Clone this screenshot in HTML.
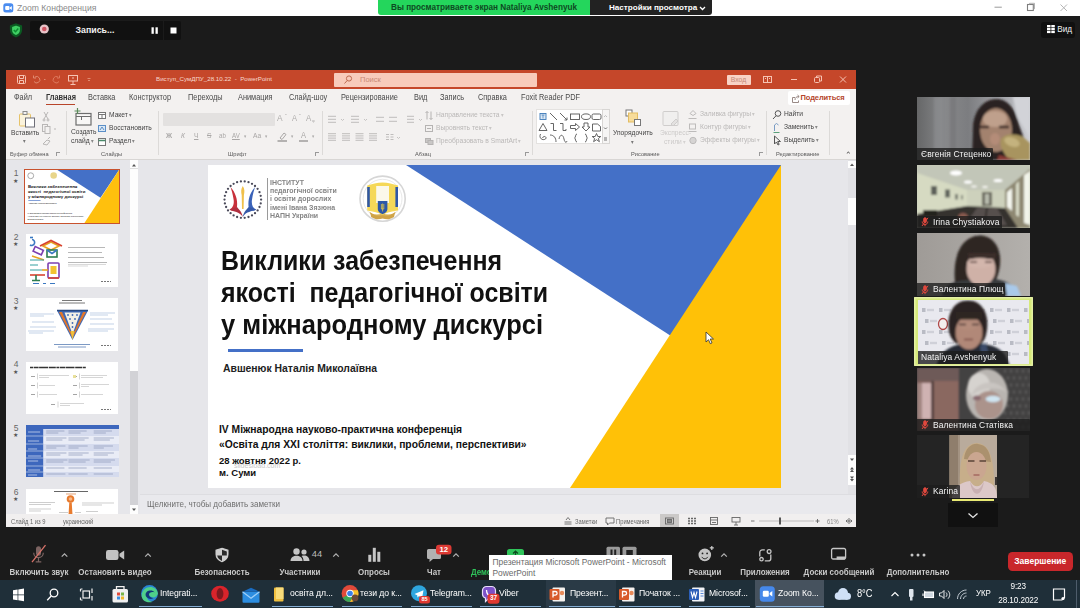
<!DOCTYPE html>
<html lang="ru">
<head>
<meta charset="utf-8">
<title>Zoom Конференция</title>
<style>
*{box-sizing:border-box;margin:0;padding:0}
html,body{width:1080px;height:608px;overflow:hidden}
body{background:#1b1b1b;font-family:"Liberation Sans",sans-serif;position:relative;color:#fff}
.a{position:absolute;white-space:nowrap}
svg{position:absolute;overflow:visible}
/* ---------- zoom title bar ---------- */
#tb{left:0;top:0;width:1080px;height:16px;background:#fff}
#tb .t{left:17px;top:2px;font-size:8.6px;color:#8a8a8a;line-height:12px}
#ban{left:378px;top:0;width:212px;height:15px;background:#24d65c;border-radius:0 0 0 3px;color:#0e4a22;font-weight:bold;font-size:8.2px;line-height:15px;text-align:center}
#ban2{left:590px;top:0;width:122px;height:15px;background:#222;border-radius:0 0 3px 0;color:#fff;font-weight:bold;font-size:8.1px;line-height:15px;text-align:left;padding-left:19px}
/* ---------- ppt ---------- */
#ppt{left:6px;top:69.500px;width:850px;height:457px;background:#e6e6ea;overflow:hidden}
#ppt .bar{left:0;top:0;width:850px;height:19px;background:#c5472a}
#ppt .tabs{left:0;top:19px;width:850px;height:18px;background:#f3f1f0}
#ppt .rib{left:0;top:37px;width:850px;height:53px;background:#f3f1f0;border-bottom:1px solid #d8d6d4}
#ppt .status{left:0;top:444px;width:850px;height:14px;background:#f1efef;padding-top:1px}
#slide{left:202px;top:95.500px;width:573px;height:323px;background:#fff;overflow:hidden}

#slide .h{left:13px;font-weight:bold;font-size:27.300px;line-height:32px;color:#111;transform-origin:0 50%;transform:scaleX(.914)}
#slide .n{left:15px;top:198px;font-weight:bold;font-size:10.4px;line-height:12px;color:#222}
#slide .c{left:11px;font-weight:bold;font-size:10.3px;line-height:12px;color:#111}
#slide .d{left:11px;font-weight:bold;font-size:9.5px;line-height:12px;color:#111}
#slide .ul{left:20px;top:184px;width:75px;height:3px;background:#4470c7}
#slide .inst{left:62px;top:13.5px;font-size:7.5px;line-height:8.35px;color:#858585;font-weight:bold;white-space:pre;transform-origin:0 0;transform:scaleX(.93)}
#slide .vl{left:58.5px;top:13px;width:1px;height:42px;background:#9a9a9a}
#slide .wm{left:26px;top:297px;font-size:7px;color:#c8c8c8}

#ppt .ttl{font-size:6.2px;line-height:12px;color:#f7d9cf}
#ppt .srch{left:328px;top:3.500px;width:203px;height:13.500px;background:#f8cbbb;border-radius:1px}
#ppt .srt{font-size:7.5px;line-height:12px;color:#c98a76}
#ppt .vhod{left:720.5px;top:5.500px;width:24px;height:9.500px;background:#f8d3c6;color:#c48a78;font-size:6.800px;line-height:9.500px;text-align:center;border-radius:1px}
#ppt .tab{font-size:8.2px;line-height:12px;color:#4a4a4a;transform-origin:0 50%;transform:scaleX(.9)}
#ppt .tab b{color:#333}
#ppt .share{left:782px;top:2.500px;width:62px;height:14px;background:#fff;border-radius:2px;color:#b5452b;font-size:7.500px;line-height:14px;padding-left:12.500px;letter-spacing:-.1px}
#ppt .rt{font-size:7.6px;line-height:10px;color:#444;transform-origin:0 50%;transform:scaleX(.88)}
#ppt .rd{font-size:7.6px;line-height:10px;color:#bab8b7;transform-origin:0 50%;transform:scaleX(.88)}
#ppt .gl{font-size:6.2px;line-height:10px;color:#585858;transform-origin:0 50%;transform:scaleX(.92)}

#thumbs{left:0;top:0;width:140px;height:458px}
#thumbs .tn{left:5px;margin-top:-3.500px;width:10px;text-align:center;font-size:8.500px;line-height:10px;color:#666}
#thumbs .tst{left:6.500px;margin-top:-3.500px;font-size:5.500px;line-height:7px;color:#555}
#thumbs .th{background:#fff;overflow:hidden}
#thumbs .sel{border:1.200px solid #c8522f}
#thumbs .t1{left:2.500px;font-weight:bold;font-size:4.400px;line-height:5px;color:#222}
#thumbs .t2{left:2px;font-weight:bold;font-size:1.900px;line-height:2px;color:#555}

#ppt .st{font-size:6.300px;line-height:9px;color:#666;transform-origin:0 50%;transform:scaleX(.92)}

.tile{overflow:visible}
.tile>svg{overflow:hidden}
.tile .nm{left:0;bottom:0;height:12.500px;background:rgba(28,28,28,.78);color:#f4f4f4;font-size:9px;line-height:12.500px;border-radius:0 1px 0 0;letter-spacing:.1px}
.tile .nm span{display:inline-block;transform-origin:0 50%;transform:scaleX(.94)}
#ppt .dd{font-size:5.500px;color:#888}
#ppt .rd .dd{color:#c8c6c5}
/* ---------- bottom ---------- */
#rec{left:29.600px;top:21.300px;width:151px;height:18.500px;background:#111;border-radius:2px}
#vid{left:1041px;top:22.200px;width:33.500px;height:15.600px;background:#101010;border-radius:3px}

#zbar .zl{font-size:8.600px;line-height:12px;color:#c8c8c8;font-weight:bold;transform:scaleX(.925)}
#endb{width:65.500px;height:18.500px;background:#c9272b;border-radius:4.500px;color:#fff;font-weight:bold;font-size:8.500px;line-height:19px;text-align:center}
#tip{width:183.500px;height:25px;background:#fff;color:#6a6a6a;font-size:8.400px;line-height:10.200px;padding:2.400px 0 0 3.800px;white-space:nowrap;transform-origin:0 0}
#task .tk{font-size:9.300px;line-height:11px;color:#fff;letter-spacing:-.1px;transform-origin:0 50%;transform:scaleX(.93)}

#zbar{left:0;top:527px;width:1080px;height:53px;background:#1b1b1b}
#task{left:0;top:579.500px;width:1080px;height:28.500px;background:#1f2f39}
</style>
</head>
<body>
<div class="a" id="tb">
  <div class="a t">Zoom Конференция</div>
</div>
<div class="a" id="ban"><span>Вы просматриваете экран Nataliya Avshenyuk</span></div>
<div class="a" id="ban2"><span>Настройки просмотра</span><svg width="7" height="5" viewBox="0 0 7 5" style="left:109px;top:5.500px" fill="none" stroke="#fff" stroke-width="1.3"><path d="M1,1l2.500,2.500l2.500,-2.500"/></svg></div>

<div class="a" id="ppt">
<!--TOP-->
<div class="a bar">
<svg width="850" height="19" viewBox="0 0 850 19" style="left:0;top:0" fill="none" stroke="#f6c3b3" stroke-width="1"><rect x="11.5" y="5.5" width="8" height="8" rx="1"/><path d="M13.5,5.5v3h4v-3M13.5,13.5v-3h4v3"/><path d="M28,11.5a3.2,3.2 0 1 0 1,-4.5M27.5,5.5v2.5h2.5" stroke="#e08a70"/><path d="M38,9.5h1.5" stroke="#e08a70"/><path d="M53,11.5a3.2,3.2 0 1 1 -1,-4.5M53.500,5.5v2.5h-2.5" stroke="#de7a5e"/><rect x="62.500" y="5.500" width="9" height="5.500" /><path d="M67,11v3M64.500,14.500h5M67,7v2"/><path d="M81.500,8.500h3M82,10.500h2" stroke="#e08a70"/></svg>
<div class="a ttl" style="left:150.0px;top:3.5px;">Виступ_СумДПУ_28.10.22&nbsp; -&nbsp; PowerPoint</div>
<div class="a srch"></div>
<div class="a srt" style="left:354.0px;top:4.0px;">Поиск</div>
<div class="a vhod">Вход</div>
<svg width="850" height="19" viewBox="0 0 850 19" style="left:0;top:0" fill="none" stroke="#f6c3b3" stroke-width="1"><circle cx="343" cy="8.500" r="2.600" stroke="#bf6a50"/><path d="M341.200,10.500l-2.700,3" stroke="#bf6a50"/><rect x="757.500" y="6.500" width="8" height="6"/><path d="M761.500,6.500v6M759,8.500h1M763,8.500h1"/><path d="M785,9.500h6"/><rect x="808.500" y="7.500" width="5" height="5" rx="1"/><path d="M810.500,7.500v-1.500h5v5h-1.500"/><path d="M834,6.500l6,6M840,6.500l-6,6"/></svg>
</div>
<div class="a tabs">
<div class="a tab" style="left:8px;top:3.500px">Файл</div>
<div class="a tab" style="left:40px;top:3.500px"><b>Главная</b></div>
<div class="a tab" style="left:82px;top:3.500px">Вставка</div>
<div class="a tab" style="left:123px;top:3.500px">Конструктор</div>
<div class="a tab" style="left:182px;top:3.500px">Переходы</div>
<div class="a tab" style="left:232px;top:3.500px">Анимация</div>
<div class="a tab" style="left:283px;top:3.500px">Слайд-шоу</div>
<div class="a tab" style="left:335px;top:3.500px">Рецензирование</div>
<div class="a tab" style="left:408px;top:3.500px">Вид</div>
<div class="a tab" style="left:434px;top:3.500px">Запись</div>
<div class="a tab" style="left:472px;top:3.500px">Справка</div>
<div class="a tab" style="left:515px;top:3.500px">Foxit Reader PDF</div>
<div class="a" style="left:40px;top:15px;width:29px;height:1.600px;background:#b8452a"></div>
<div class="a share"><svg width="10" height="10" viewBox="0 0 10 10" style="left:2.500px;top:3px" fill="none" stroke="#9a8a86" stroke-width="1"><path d="M4,3.500h-2.500v5h6v-2M4,6c0,-2.500 1.500,-3.500 4,-3.500M6.500,1l1.700,1.500l-1.700,1.500"/></svg><b>Поделиться</b></div>
</div>
<!--/TOP-->
<!--RIB-->
<div class="a rib">
<div class="a" style="left:60px;top:4px;width:1px;height:44px;background:#dcdad8"></div>
<div class="a" style="left:152px;top:4px;width:1px;height:44px;background:#dcdad8"></div>
<div class="a" style="left:316px;top:4px;width:1px;height:44px;background:#dcdad8"></div>
<div class="a" style="left:526px;top:4px;width:1px;height:44px;background:#dcdad8"></div>
<div class="a" style="left:760px;top:4px;width:1px;height:44px;background:#dcdad8"></div>
<div class="a" style="left:823px;top:4px;width:1px;height:44px;background:#dcdad8"></div>
<div class="a gl" style="left:4.0px;top:42.6px;">Буфер обмена</div>
<div class="a gl" style="left:95.0px;top:42.6px;">Слайды</div>
<div class="a gl" style="left:222.0px;top:42.6px;">Шрифт</div>
<div class="a gl" style="left:409.0px;top:42.6px;">Абзац</div>
<div class="a gl" style="left:625.0px;top:42.6px;">Рисование</div>
<div class="a gl" style="left:770.0px;top:42.6px;">Редактирование</div>
<div class="a" style="left:50px;top:45px;width:4px;height:4px;border-left:1px solid #999;border-top:1px solid #999"></div>
<div class="a" style="left:309px;top:45px;width:4px;height:4px;border-left:1px solid #999;border-top:1px solid #999"></div>
<div class="a" style="left:519px;top:45px;width:4px;height:4px;border-left:1px solid #999;border-top:1px solid #999"></div>
<div class="a" style="left:753px;top:45px;width:4px;height:4px;border-left:1px solid #999;border-top:1px solid #999"></div>
<div class="a rt" style="left:5.0px;top:21.2px;">Вставить</div>
<div class="a rt" style="left:16.5px;top:29.8px;font-size:5.500px;color:#777">▾</div>
<div class="a rt" style="left:65.0px;top:20.5px;">Создать</div>
<div class="a rt" style="left:65.0px;top:29.6px;">слайд<span class="dd"> ▾</span></div>
<div class="a rt" style="left:103.0px;top:3.5px;">Макет<span class="dd"> ▾</span></div>
<div class="a rt" style="left:103.0px;top:16.5px;">Восстановить</div>
<div class="a rt" style="left:103.0px;top:29.8px;">Раздел<span class="dd"> ▾</span></div>
<div class="a" style="left:157px;top:6px;width:112px;height:13px;background:#e3e1e0;border-radius:1px"></div>
<div class="a rd" style="left:270.5px;top:6.3px;font-size:9.5px;color:#aeacab">A</div>
<div class="a rd" style="left:279.0px;top:6.3px;font-size:6px;margin-top:-2px;color:#aeacab">ˆ</div>
<div class="a rd" style="left:286.0px;top:6.3px;font-size:8.5px;color:#aeacab">A</div>
<div class="a rd" style="left:293.0px;top:6.3px;font-size:6px;margin-top:-2px;color:#aeacab">ˇ</div>
<div class="a rd" style="left:300.0px;top:6.3px;font-size:9px;color:#aeacab">A</div>
<div class="a rd" style="left:306.0px;top:6.3px;font-size:7px;margin-top:2px;color:#aeacab">ᵩ</div>
<div class="a rd" style="left:160.0px;top:24.4px;font-weight:bold;color:#a9a7a6">Ж</div>
<div class="a rd" style="left:174.5px;top:24.4px;font-style:italic;color:#a9a7a6">К</div>
<div class="a rd" style="left:187.5px;top:24.4px;text-decoration:underline;color:#a9a7a6">Ч</div>
<div class="a rd" style="left:201.0px;top:24.4px;text-decoration:line-through;color:#a9a7a6">S</div>
<div class="a rd" style="left:212.5px;top:24.4px;font-size:7px;color:#a9a7a6">ab</div>
<div class="a rd" style="left:226.0px;top:24.4px;text-decoration:underline;font-size:7px;color:#a9a7a6">AV</div>
<div class="a rd" style="left:238.0px;top:24.4px;font-size:5px;color:#a9a7a6">▾</div>
<div class="a rd" style="left:247.0px;top:24.4px;;color:#a9a7a6">Aa</div>
<div class="a rd" style="left:259.0px;top:24.4px;font-size:5px;color:#a9a7a6">▾</div>
<div class="a rd" style="left:285.0px;top:24.4px;font-size:5px;color:#a9a7a6">▾</div>
<div class="a rd" style="left:294.5px;top:24.4px;font-size:8.500px;margin-top:-1px;color:#a9a7a6">A</div>
<div class="a rd" style="left:306.0px;top:24.4px;font-size:5px;color:#a9a7a6">▾</div>
<div class="a rd" style="left:430.0px;top:3.3px;">Направление текста<span class="dd"> ▾</span></div>
<div class="a rd" style="left:430.0px;top:16.5px;">Выровнять текст<span class="dd"> ▾</span></div>
<div class="a rd" style="left:430.0px;top:29.8px;">Преобразовать в SmartArt<span class="dd"> ▾</span></div>
<div class="a" style="left:530px;top:2.5px;width:73.5px;height:34.5px;background:#fff;border:1px solid #e4e2e0"></div>
<div class="a" style="left:595.5px;top:2.5px;width:8px;height:34.5px;background:#f6f5f4;border:1px solid #d8d6d4"></div>
<div class="a rt" style="left:606.7px;top:21.0px;">Упорядочить</div>
<div class="a rt" style="left:625.0px;top:30.0px;font-size:5.500px;color:#777">▾</div>
<div class="a rd" style="left:654.0px;top:21.0px;opacity:.7">Экспресс-</div>
<div class="a rd" style="left:658.0px;top:30.5px;opacity:.7">стили<span class="dd"> ▾</span></div>
<div class="a rd" style="left:694.0px;top:2.9px;">Заливка фигуры<span class="dd"> ▾</span></div>
<div class="a rd" style="left:694.0px;top:15.5px;">Контур фигуры<span class="dd"> ▾</span></div>
<div class="a rd" style="left:694.0px;top:28.4px;">Эффекты фигуры<span class="dd"> ▾</span></div>
<div class="a rt" style="left:778.0px;top:2.9px;">Найти</div>
<div class="a rt" style="left:778.0px;top:15.5px;">Заменить<span class="dd"> ▾</span></div>
<div class="a rt" style="left:778.0px;top:28.4px;">Выделить<span class="dd"> ▾</span></div>
<div class="a rt" style="left:839.0px;top:43.6px;font-size:9px;margin-top:0px;color:#555">⌃</div>
<svg width="850" height="53" viewBox="0 0 850 53" style="left:0;top:0" fill="none" stroke-width="1">
<g transform="translate(20,15)"><rect x="-6.500" y="-8" width="11" height="12" rx="1" stroke="#e6c36a" fill="#fbf3dc"/><rect x="-3" y="-10.500" width="4" height="3" stroke="#8a8a8a" fill="#f3f1f0"/><rect x="-.5" y="-4" width="9" height="9" stroke="#6f6f78" fill="#fff"/></g>
<g stroke="#b9b7b6"><path d="M38.0,5.0l4,7M42.0,5.0l-4,7"/><circle cx="38.0" cy="13.0" r="1"/><circle cx="42.0" cy="13.0" r="1"/><rect x="36.5" y="17.5" width="5" height="7"/><rect x="39.0" y="19.5" width="5" height="7" fill="#f3f1f0"/><path d="M48.0,22.0h2"/><path d="M37.0,37.0l4,-4l3,1l-3,4zM42.0,32.0l2,-2"/></g>
<g transform="translate(77,12)" stroke="#6d6d6d"><rect x="-7" y="-5.500" width="15" height="11.500" stroke-width="1.200" fill="#f8f7f6"/><path d="M-7,-2.500h15M-1.500,-2.500v3.500" stroke-width="1"/><path d="M-5.500,-11v6M-8.500,-8h6" stroke="#5a8a5a" stroke-width="1.200"/></g>
<g stroke="#777"><rect x="92.5" y="5.5" width="7" height="6" fill="#fff"/><path d="M92.5,7.5h7M96.0,7.5v4"/><rect x="92.5" y="18.5" width="7" height="6" stroke="#5b8fc7" fill="#dbe8f5"/><path d="M94.0,23.0l2,-3l2,3" stroke="#5b8fc7"/><rect x="92.5" y="31.5" width="7" height="7" fill="#fff"/><path d="M92.5,33.5h7" stroke="#4a8a6a" stroke-width="1.500"/></g>
<path d="M322.0,9.3h8" stroke="#bfbdbc"/><path d="M322.0,12.3h8" stroke="#bfbdbc"/><path d="M322.0,15.3h8" stroke="#bfbdbc"/><path d="M345.0,9.3h8" stroke="#bfbdbc"/><path d="M345.0,12.3h8" stroke="#bfbdbc"/><path d="M345.0,15.3h8" stroke="#bfbdbc"/><path d="M370.0,10.3h8" stroke="#bfbdbc"/><path d="M370.0,14.3h8" stroke="#bfbdbc"/><path d="M383.0,10.3h8" stroke="#bfbdbc"/><path d="M383.0,14.3h8" stroke="#bfbdbc"/><path d="M401.0,9.3h7" stroke="#bfbdbc"/><path d="M401.0,12.3h7" stroke="#bfbdbc"/><path d="M401.0,15.3h7" stroke="#bfbdbc"/>
<path d="M335.0,12.0l1.5,1.500l1.500,-1.500" stroke="#c5c3c2"/>
<path d="M358.0,12.0l1.5,1.500l1.500,-1.500" stroke="#c5c3c2"/>
<path d="M413.0,12.0l1.5,1.500l1.500,-1.500" stroke="#c5c3c2"/>
<path d="M322.0,26.7h8" stroke="#bfbdbc"/><path d="M322.0,28.9h8" stroke="#bfbdbc"/><path d="M322.0,31.1h8" stroke="#bfbdbc"/><path d="M322.0,33.3h8" stroke="#bfbdbc"/>
<path d="M336.0,26.7h8" stroke="#bfbdbc"/><path d="M336.0,28.9h8" stroke="#bfbdbc"/><path d="M336.0,31.1h8" stroke="#bfbdbc"/><path d="M336.0,33.3h8" stroke="#bfbdbc"/>
<path d="M349.5,26.7h8" stroke="#bfbdbc"/><path d="M349.5,28.9h8" stroke="#bfbdbc"/><path d="M349.5,31.1h8" stroke="#bfbdbc"/><path d="M349.5,33.3h8" stroke="#bfbdbc"/>
<path d="M363.0,26.7h8" stroke="#bfbdbc"/><path d="M363.0,28.9h8" stroke="#bfbdbc"/><path d="M363.0,31.1h8" stroke="#bfbdbc"/><path d="M363.0,33.3h8" stroke="#bfbdbc"/>
<path d="M380.0,27.5h3" stroke="#bfbdbc"/><path d="M380.0,30.0h3" stroke="#bfbdbc"/><path d="M380.0,32.5h3" stroke="#bfbdbc"/><path d="M384.5,27.5h3" stroke="#bfbdbc"/><path d="M384.5,30.0h3" stroke="#bfbdbc"/><path d="M384.5,32.5h3" stroke="#bfbdbc"/><path d="M391.0,30.0l1.500,1.500l1.500,-1.500" stroke="#c5c3c2"/>
<g stroke="#b5b3b2"><path d="M421.0,4.5v8M425.0,4.5v8M419.5,6.0l1.500,-1.500l1.500,1.500M423.5,11.0l1.500,1.500l1.500,-1.500"/><rect x="419.5" y="18.5" width="7" height="6"/><path d="M421.0,21.5h4"/><rect x="419.5" y="31.5" width="5" height="4" fill="#c9c7c6"/><rect x="422.0" y="33.5" width="5" height="4" fill="#c9c7c6"/></g>
<g stroke="#a9a7a6"><path d="M274.0,31.0l4,-5l2,1.500l-4,5z"/><path d="M271.5,34.0h9.500" stroke-width="1.700"/><path d="M293.0,34.0h9" stroke-width="1.700"/></g>
<g stroke="#555" stroke-width=".9"><rect x="534.0" y="6.5" width="6" height="6" stroke="#3d7ab8" fill="#dce9f5"/><path d="M535.5,8.0h3M537.0,8.0v3.500" stroke="#3d7ab8" stroke-width=".7"/><path d="M544.0,6.0l7,7"/><path d="M554.0,6.0l7,7M561.0,10.5v2.500h-2.500"/><rect x="564.5" y="7.0" width="9" height="5.500"/><ellipse cx="580.0" cy="9.7" rx="4.500" ry="2.800"/><rect x="586.0" y="7.0" width="9" height="5.500" rx="1.500"/><path d="M537.0,16.5l4,7h-8z"/><path d="M544.5,16.5h3v7h3"/><path d="M554.0,16.5h3v7h3M560.0,22.0v1.500"/><path d="M564.5,18.5h5v-2l4,3.500l-4,3.500v-2h-5z"/><path d="M578.0,16.0h4v4h2l-4,4l-4,-4h2z"/><path d="M586.5,17.0h5l3,2.500v4.500h-8z"/><path d="M534.5,27.0c-2,4 2,7 5,5c2,-2 -2,-4 -3,-1"/><path d="M544.0,28.0c4,0 6,3 6,7"/><path d="M553.0,32.0c1,-5 4,-5 5,0s3,3 3,2"/><path d="M571.0,27.0c-2,0 -1,3.500 -2.500,4c1.500,.5 .5,4 2.500,4"/><path d="M579.0,27.0c2,0 1,3.500 2.500,4c-1.500,.5 -.5,4 -2.500,4"/><path d="M590.5,26.5l1.300,3h3l-2.400,2l1,3.200l-2.900,-2l-2.900,2l1,-3.200l-2.400,-2h3z"/><path d="M598.0,20.5l1.500,1.500l1.500,-1.500M598.0,31.0h3M598.0,33.0h3" stroke="#666"/><path d="M598.0,10.0l1.500,-1.500l1.500,1.500" stroke="#bbb"/></g>
<g transform="translate(627,11)"><rect x="-7" y="-8" width="6" height="6" stroke="#777" fill="#fff"/><rect x="-4.500" y="-5" width="9" height="9" stroke="#e3bd62" fill="#f7dc9a"/><rect x="1.500" y="1.500" width="6" height="6" stroke="#777" fill="#fff"/></g>
<g transform="translate(665,12)" stroke="#cfcdcc"><rect x="-8" y="-7.500" width="15" height="14" rx="1" fill="#f0efee"/><path d="M0,5l5,-5l2,2l-5,5z" fill="#e3e1e0"/></g>
<g stroke="#bdbbba"><path d="M684.0,6.5l3,-3l3,3l-3,2zM682.5,11.5h8" /><rect x="683.5" y="17.0" width="6" height="5"/><path d="M682.5,24.5h8"/><circle cx="687.0" cy="33.5" r="3.200" fill="#d6d4d3"/></g>
<g stroke="#555"><circle cx="772.0" cy="6.5" r="2.800"/><path d="M770.0,8.8l-3,3.200"/></g>
<g stroke="#7a9cc4"><path d="M768.5,24.0v-6l2,-1.500l2,1.500" /><path d="M767.5,25.5h6" stroke="#5aa07a"/></g>
<path d="M768.5,29.0v8l2,-2l1.500,3l1.200,-.6l-1.500,-2.900h2.800z" stroke="#555"/>
</svg>
</div>
<!--/RIB-->
<!--PANEL-->
<div class="a" id="thumbs">
<div class="a tn" style="top:102.3px">1</div>
<div class="a tst" style="top:111.8px">★</div>
<div class="a tn" style="top:165.7px">2</div>
<div class="a tst" style="top:175.2px">★</div>
<div class="a tn" style="top:229.5px">3</div>
<div class="a tst" style="top:239.0px">★</div>
<div class="a tn" style="top:293.0px">4</div>
<div class="a tst" style="top:302.5px">★</div>
<div class="a tn" style="top:356.8px">5</div>
<div class="a tst" style="top:366.3px">★</div>
<div class="a tn" style="top:420.6px">6</div>
<div class="a tst" style="top:430.1px">★</div>
<div class="a th sel" style="left:18.4px;top:99.5px;width:95.600px;height:54.800px"><svg width="94" height="53" viewBox="0 0 574 323" style="left:0;top:0" preserveAspectRatio="none"><polygon points="198,0 574,0 461,169" fill="#4470c7"/><polygon points="574,0 574,323 363,323" fill="#ffc00d"/><circle cx="35" cy="35" r="18" fill="none" stroke="#999" stroke-width="5"/><circle cx="175" cy="34" r="20" fill="#e8d58a"/><rect x="20" y="183" width="75" height="4" fill="#4470c7"/></svg><div class="a t1" style="top:13.500px">Виклики забезпечення</div><div class="a t1" style="top:18.800px">якості&nbsp; педагогічної освіти</div><div class="a t1" style="top:24.100px">у міжнародному дискурсі</div><div class="a t2" style="top:32px;left:3px">Авшенюк Наталія Миколаївна</div><div class="a t2" style="top:42px">IV Міжнародна науково-практична конференція</div><div class="a t2" style="top:44.500px">«Освіта для XXI століття: виклики, проблеми, перспективи»</div><div class="a t2" style="top:47.500px">28 жовтня 2022 р.</div></div>
<div class="a th" style="left:20.3px;top:164.7px;width:91.700px;height:52.500px"><svg width="92" height="53" viewBox="0 0 92 53" style="left:0;top:0" fill="none" stroke-width="1.600"><path d="M6,5.500a3,3 0 1 1 -2,5.500" stroke="#3a78c2"/><path d="M4,3.500h3" stroke="#3a78c2"/><path d="M17,12l8,-4l8,4l-8,4z" stroke="#e6a320"/><path d="M14,12l11,-5.500l11,5.500" stroke="#d8432f"/><rect x="8" y="14" width="9" height="5" transform="rotate(25 12 16)" stroke="#7c3fb0"/><path d="M6,22l12,4" stroke="#e6a320"/><rect x="21" y="16" width="10" height="7" stroke="#2e7d4f"/><path d="M21,16l5,3.500l5,-3.500" stroke="#3a78c2"/><rect x="22" y="29" width="11" height="15" rx="1" stroke="#7c3fb0"/><rect x="24.500" y="32" width="6" height="8" fill="#f2c230" stroke="none"/><path d="M22,44h11" stroke="#d8432f"/><path d="M4,26h14M4,31h8M4,36h12" stroke="#35a0a0" stroke-width="1"/><path d="M4,41h15" stroke="#d8432f"/><path d="M10,41v5M6,46.500h8" stroke="#2e7d4f"/><path d="M16,36h6" stroke="#e6a320"/><path d="M7,49.500h6M17,49.500h3M24,49.500h5" stroke="#3a78c2" stroke-width="1"/><g stroke="#9a9a9a" stroke-width=".7"><path d="M42,13.500h37M42,18.500h34M42,23.500h36M42,28.500h39"/><path d="M42,30.500h38M42,32h20" stroke="#c8c8c8"/></g><path d="M75,47.500h10" stroke="#777" stroke-width="1.200" stroke-dasharray="2 1"/></svg></div>
<div class="a th" style="left:20.3px;top:228.5px;width:91.700px;height:52.500px"><svg width="92" height="53" viewBox="0 0 92 53" style="left:0;top:0" fill="none"><path d="M36,2.500h20M33,5h26" stroke="#555" stroke-width=".8"/><polygon points="31,12.500 62,12.500 46.500,42" fill="#3f69b5"/><polygon points="33,14 60,14 46.500,40" fill="#e2762a"/><polygon points="36,14 57,14 46.500,38" fill="#3f69b5"/><polygon points="38.500,14.500 54.500,14.500 46.500,36" fill="#f3f0e6"/><polygon points="44.500,33 48.500,33 46.500,42" fill="#f0c23a"/><path d="M31,12.500h31" stroke="#27477f" stroke-width="1.500"/><g fill="#3f69b5"><circle cx="42" cy="17" r=".9"/><circle cx="46.500" cy="17" r=".9"/><circle cx="51" cy="17" r=".9"/><circle cx="44" cy="21" r=".9"/><circle cx="49" cy="21" r=".9"/><circle cx="46.500" cy="25" r=".9"/><circle cx="46.500" cy="29" r=".9"/></g><g stroke="#a9bfdc" stroke-width=".7"><path d="M4,16h24M4,18h14M6,24h22M4,29h26M2,33h26M3,35h14"/><path d="M64,15h25M64,17h18M64,21h22M64,26h24M62,31h26M62,33h20"/></g><path d="M28,46.500h36M32,49h28" stroke="#5a7fb5" stroke-width=".8"/><path d="M75,47.500h10" stroke="#777" stroke-width="1.200" stroke-dasharray="2 1"/></svg></div>
<div class="a th" style="left:20.3px;top:292.0px;width:91.700px;height:52.500px"><svg width="92" height="53" viewBox="0 0 92 53" style="left:0;top:0" fill="none"><path d="M4,5.500h56" stroke="#333" stroke-width="1.300" stroke-dasharray="3 .6 5 .5 9 .7 7 .6"/><g stroke="#9a9a9a" stroke-width=".9"><path d="M5,14.500h4M5,23.500h4M5,32.500h4M47,14.500h4M47,23.500h4M47,32.500h4M25,42.500h4"/></g><g stroke="#bbb" stroke-width=".6"><path d="M11.500,11.500v6M11.500,20.500v6M11.500,29.500v6M53.500,11.500v6M53.500,20.500v6M53.500,29.500v6M32,39.500v6"/></g><g stroke="#c4c4c4" stroke-width=".7"><path d="M13,13.500h30M13,15.500h10M13,23.500h16M13,32.500h18M55,13.500h26M55,15.500h22M55,22.500h28M55,24.500h8M55,32.500h22M34,41.500h24M34,43.500h10"/></g><path d="M48.500,13v3" stroke="#e8e09a" stroke-width="3"/><path d="M75,47.500h10" stroke="#777" stroke-width="1.200" stroke-dasharray="2 1"/></svg></div>
<div class="a th" style="left:19.7px;top:355.8px;width:92.900px;height:52.200px;background:#e4e8f4"><svg width="93" height="53" viewBox="0 0 92 53" style="left:0;top:0" preserveAspectRatio="none" fill="none"><rect x="0" y="4" width="92" height="7" fill="#d5dbee"/><rect x="0" y="11" width="92" height="8" fill="#e9ecf6"/><rect x="0" y="19" width="92" height="7" fill="#d5dbee"/><rect x="0" y="26" width="92" height="7" fill="#e9ecf6"/><rect x="0" y="33" width="92" height="8" fill="#d5dbee"/><rect x="0" y="41" width="92" height="6" fill="#e9ecf6"/><rect x="0" y="47" width="92" height="5.5" fill="#d5dbee"/><rect x="0" y="0" width="92" height="4" fill="#3d67bd"/><rect x="0" y="4" width="17" height="49" fill="#3d67bd"/><g stroke="#8d97b8" stroke-width=".7"><path d="M20,6h18" /><path d="M20,8h12" /><path d="M20,13h20" /><path d="M20,15h16" /><path d="M20,21h19" /><path d="M20,23h10" /><path d="M20,28h20" /><path d="M20,30h14" /><path d="M20,35h21" /><path d="M20,37h17" /><path d="M20,43h18" /><path d="M20,49h19" /><path d="M42,6h18" /><path d="M42,8h12" /><path d="M42,13h20" /><path d="M42,15h16" /><path d="M42,21h19" /><path d="M42,23h10" /><path d="M42,28h20" /><path d="M42,30h14" /><path d="M42,35h21" /><path d="M42,37h17" /><path d="M42,43h18" /><path d="M42,49h19" /><path d="M67,6h18" /><path d="M67,8h12" /><path d="M67,13h20" /><path d="M67,15h16" /><path d="M67,21h19" /><path d="M67,23h10" /><path d="M67,28h20" /><path d="M67,30h14" /><path d="M67,35h21" /><path d="M67,37h17" /><path d="M67,43h18" /><path d="M67,49h19" /></g><g stroke="#c9d4ee" stroke-width=".8"><path d="M2,7h12M2,16h11M2,24h9M2,31h13M2,36h10M2,45h12M2,50h9"/></g><g stroke="#fff" stroke-width=".5"><path d="M0,11h17M0,19h17M0,26h17M0,33h17M0,41h17M0,47h17"/></g></svg></div>
<div class="a th" style="left:20.3px;top:419.6px;width:91.700px;height:26px"><svg width="92" height="26" viewBox="0 0 92 26" style="left:0;top:0" fill="none"><path d="M28,2.500h34" stroke="#555" stroke-width=".9"/><path d="M40,5h10" stroke="#d97a3a" stroke-width=".7"/><circle cx="44.500" cy="10" r="3.800" fill="#e87b2e"/><circle cx="44.500" cy="10" r="1.800" fill="#f6b98a"/><path d="M43.300,13.500h2.400l.8,12.500h-4z" fill="#e87b2e"/><g stroke="#b9b9b9" stroke-width=".7"><path d="M3,13.500h26M3,15.500h22M3,20h22M3,22h12M56,14h32M56,16h20M33,23.500h9M49,23.500h6M60,22.500h12"/></g></svg></div>
<div class="a" style="left:124px;top:90px;width:7.500px;height:355px;background:#d2d2d6"></div>
<div class="a" style="left:124px;top:90px;width:7.500px;height:211px;background:#fdfdfd"></div>
<div class="a" style="left:124px;top:98.5px;width:7.500px;height:1px;background:#dedede"></div>
<div class="a" style="left:124px;top:435.5px;width:7.500px;height:9px;background:#fdfdfd"></div>
<svg width="8" height="6" viewBox="0 0 8 6" style="left:124px;top:92.5px"><path d="M2,4.500l2,-2.500l2,2.500z" fill="#555"/></svg>
<svg width="8" height="6" viewBox="0 0 8 6" style="left:124px;top:437px"><path d="M2,1.500l2,2.500l2,-2.500z" fill="#555"/></svg>
</div>
<!--/PANEL-->
  <div class="a" id="slide">
    <svg width="574" height="323" viewBox="0 0 574 323" style="left:0;top:0">
      <polygon points="198,0 574,0 574,6 463,171" fill="#4470c7"/>
      <polygon points="573,0 574,0 574,323 362,323" fill="#ffc107"/>
<g id="lg1"><g fill="#4a4a5a"><circle cx="53.1" cy="34.6" r="1.15"/><circle cx="52.7" cy="38.4" r="1.15"/><circle cx="51.5" cy="42.0" r="1.15"/><circle cx="49.6" cy="45.4" r="1.15"/><circle cx="47.0" cy="48.2" r="1.15"/><circle cx="44.0" cy="50.4" r="1.15"/><circle cx="40.5" cy="52.0" r="1.15"/><circle cx="36.7" cy="52.8" r="1.15"/><circle cx="32.9" cy="52.8" r="1.15"/><circle cx="29.1" cy="52.0" r="1.15"/><circle cx="25.6" cy="50.4" r="1.15"/><circle cx="22.6" cy="48.2" r="1.15"/><circle cx="20.0" cy="45.4" r="1.15"/><circle cx="18.1" cy="42.0" r="1.15"/><circle cx="16.9" cy="38.4" r="1.15"/><circle cx="16.5" cy="34.6" r="1.15"/><circle cx="16.9" cy="30.8" r="1.15"/><circle cx="18.1" cy="27.2" r="1.15"/><circle cx="20.0" cy="23.8" r="1.15"/><circle cx="22.6" cy="21.0" r="1.15"/><circle cx="25.6" cy="18.8" r="1.15"/><circle cx="29.1" cy="17.2" r="1.15"/><circle cx="32.9" cy="16.4" r="1.15"/><circle cx="36.7" cy="16.4" r="1.15"/><circle cx="40.5" cy="17.2" r="1.15"/><circle cx="44.0" cy="18.8" r="1.15"/><circle cx="47.0" cy="21.0" r="1.15"/><circle cx="49.6" cy="23.8" r="1.15"/><circle cx="51.5" cy="27.2" r="1.15"/><circle cx="52.7" cy="30.8" r="1.15"/></g>
<path d="M22.5,22 C27,27 30,34 29,42 C27.5,46 24,47 21.5,44.5 C25,43 26.5,39 25.5,34 C24.8,29 23.5,25 22.5,22Z" fill="#c8313b"/>
<path d="M47.1,22 C42.6,27 39.6,34 40.6,42 C42.1,46 45.6,47 48.1,44.5 C44.6,43 43.1,39 44.1,34 C44.8,29 46.1,25 47.1,22Z" fill="#3a62b8"/>
<path d="M21.5,44.5 C26,47 31,46 34.8,52 C34,47 31,44.5 29,42Z" fill="#b03040"/>
<path d="M48.1,44.5 C43.6,47 38.6,46 34.8,52 C35.6,47 38.6,44.5 40.6,42Z" fill="#3558a8"/>
<path d="M34.8,21 C36.8,24 36.6,27 35.9,30 L35.6,44 L34,44 L33.7,30 C33,27 32.8,24 34.8,21Z" fill="#f0c04a"/>
</g>
<g id="lg2">
<circle cx="174.6" cy="33.7" r="22.6" fill="#fff" stroke="#d6d6d6" stroke-width="1.6"/>
<circle cx="174.6" cy="33.7" r="19.4" fill="none" stroke="#e2e2e2" stroke-width=".8"/>
<path d="M160.5,46 C164,52 170,53.5 174.6,52 C179,53.5 185,52 188.7,46 C186,49.5 180,50.5 174.6,48.5 C169,50.5 163,49.5 160.5,46Z" fill="#d9b050"/>
<path d="M162,47 C166,51 171,51.8 174.6,50.3 C178,51.8 183,51 187.2,47 L186,52 C181,55 178,54.5 174.6,53.4 C171,54.5 168,55 163.2,52Z" fill="#cfa347"/>
<path d="M159.2,20.5 C164,19 169,17.5 174.6,17.5 C180,17.5 185,19 190,20.5 L190,45.5 C185,46.5 179,47 174.6,50 C170,47 164,46.5 159.2,45.5Z" fill="#f5d858"/>
<rect x="159.2" y="22" width="2.6" height="20" fill="#2f57a6"/>
<rect x="187.4" y="22" width="2.6" height="20" fill="#2f57a6"/>
<rect x="168.2" y="21" width="12.8" height="17" fill="#fbf8ea"/>
<path d="M169.8,36 H179.4 V44 C179.4,47 176.5,48.3 174.6,49.2 C172.7,48.3 169.8,47 169.8,44Z" fill="#2d58a8"/>
<path d="M173.4,39 v5 h2.4 v-5 M174.6,38.5 v8" stroke="#f0d040" stroke-width=".7" fill="none"/>
</g>
    </svg>
    <div class="a h" style="top:79.9px">Виклики забезпечення</div>
    <div class="a h" style="top:112.1px">якості&nbsp; педагогічної освіти</div>
    <div class="a h" style="top:144.3px;transform:scaleX(.935)">у міжнародному дискурсі</div>
    <div class="a ul"></div>
    <div class="a n">Авшенюк Наталія Миколаївна</div>
    <div class="a c" style="top:259.300px">IV Міжнародна науково-практична конференція</div>
    <div class="a c" style="top:273.800px">«Освіта для XXI століття: виклики, проблеми, перспективи»</div>
    <div class="a wm">slidesload.com</div>
    <div class="a d" style="top:290px">28 жовтня 2022 р.</div>
    <div class="a d" style="top:302px">м. Суми</div>
    <div class="a vl"></div>
    <div class="a inst">ІНСТИТУТ
педагогічної освіти
і освіти дорослих
імені Івана Зязюна
НАПН України</div>
  </div>
<!--STATUS-->
<div class="a" style="left:134px;top:424px;width:716px;height:21px;background:#e9e9ed;border-top:1px solid #dddde1"></div>
<div class="a" style="left:141px;top:429px;font-size:8.300px;line-height:11px;color:#6e6e6e;transform-origin:0 50%;transform:scaleX(.97)">Щелкните, чтобы добавить заметки</div>
<div class="a" style="left:841.5px;top:90px;width:8.500px;height:334px;background:#e1e1e5"></div>
<div class="a" style="left:841.5px;top:91.5px;width:8.500px;height:7px;background:#fdfdfd"></div>
<div class="a" style="left:841.5px;top:128.5px;width:8.500px;height:26.500px;background:#fdfdfd"></div>
<div class="a" style="left:841.5px;top:385px;width:8.500px;height:30px;background:#fdfdfd"></div>
<svg width="8" height="30" viewBox="0 0 8 30" style="left:842px;top:385px" fill="#555"><path d="M2,3.500l2,2.500l2,-2.500z"/><path d="M2,14.500l2,-2.500l2,2.500zM2,17l2,-2.500l2,2.500z"/><path d="M2,21.500l2,2.500l2,-2.500zM2,24l2,2.500l2,-2.500z"/></svg>
<svg width="8" height="8" viewBox="0 0 8 8" style="left:842px;top:91px" fill="#555"><path d="M2,5l2,-2.500l2,2.500z"/></svg>
<div class="a status">
<div class="a st" style="left:4.500px;top:3px">Слайд 1 из 9</div>
<div class="a st" style="left:56.500px;top:3px">украинский</div>
<div class="a" style="left:654px;top:0;width:19px;height:14px;background:#cbc9c8"></div>
<div class="a st" style="left:569px;top:3px">Заметки</div>
<div class="a st" style="left:610px;top:3px">Примечания</div>
<div class="a st" style="left:821px;top:3px;color:#888">61%</div>
<svg width="850" height="13" viewBox="0 0 850 13" style="left:0;top:1px" fill="none" stroke="#666" stroke-width=".9"><path d="M558.5,7h7M558.5,9h7M560.0,5l2,-2.500l2,2.500"/><path d="M600.0,3h8v5h-4.500l-2,2v-2h-1.500z"/><rect x="659.5" y="3" width="8" height="6"/><rect x="661.5" y="4.5" width="4" height="3" fill="#888"/><path d="M682.0,3.5h8M682.0,6h8M682.0,8.5h8" stroke-width="1.600" stroke-dasharray="2 1"/><rect x="704.5" y="2.5" width="7" height="7"/><path d="M704.5,5h7M706.0,7.5h4"/><rect x="726.0" y="2.5" width="8" height="4.500"/><path d="M730.0,7v3M728.0,10h4"/><path d="M745.0,6h3.500" /><path d="M753.0,6h55" stroke="#aaa" stroke-width=".7"/><rect x="773.0" y="2.5" width="2" height="7" fill="#555" stroke="none"/><path d="M809.5,6h4M811.5,4v4"/><path d="M840.0,6h6M843.0,3v6M841.5,4.5l-1.500,1.500l1.500,1.500M844.5,4.5l1.500,1.500l-1.500,1.500"/></svg>
</div>
<!--/STATUS-->
</div>

<!--TILES-->
<svg width="0" height="0" style="left:0;top:0"><defs><filter id="b1" x="-10%" y="-10%" width="120%" height="120%"><feGaussianBlur stdDeviation="1.1"/></filter><filter id="b2" x="-10%" y="-10%" width="120%" height="120%"><feGaussianBlur stdDeviation="0.7"/></filter><filter id="b3" x="-10%" y="-10%" width="120%" height="120%"><feGaussianBlur stdDeviation="0.9"/></filter><linearGradient id="g1" x1="0" x2="1" y1="0" y2="0"><stop offset="0" stop-color="#666768"/><stop offset=".25" stop-color="#87888a"/><stop offset=".45" stop-color="#7c7d80"/><stop offset=".8" stop-color="#a9aaaf"/><stop offset="1" stop-color="#cfd0d5"/></linearGradient><linearGradient id="g3" x1="0" x2="1" y1="0" y2="0"><stop offset="0" stop-color="#9f9b97"/><stop offset="1" stop-color="#b3b0ac"/></linearGradient></defs></svg>
<div class="a tile" style="left:917px;top:97px;width:113px;height:63px"><svg width="113" height="63" viewBox="0 0 113 63" style="left:0;top:0"><rect width="113" height="63" fill="url(#g1)"/><g filter="url(#b1)"><rect x="17" y="0" width="9" height="63" fill="#8e8f92" opacity=".6"/><rect x="33" y="0" width="6" height="63" fill="#6f7073" opacity=".5"/><path d="M55,63 L56,30 C57,14 66,2 80,2 C93,3 99,14 102,28 L110,50 L113,63Z" fill="#2a2321"/><path d="M100,20 L113,40 L113,0 L96,0Z" fill="#d2d3d8"/><ellipse cx="79" cy="33" rx="16" ry="22" fill="#a3826e"/><ellipse cx="78" cy="22" rx="12" ry="8" fill="#bfa08c"/><path d="M62,30 h10 M82,30 h10" stroke="#3a2c28" stroke-width="2.500"/><ellipse cx="78" cy="42" rx="5" ry="6" fill="#b48c78"/><path d="M84,42 C88,36 98,36 106,40 L113,46 L113,63 L92,63 C86,56 82,48 84,42Z" fill="#a8945e"/><ellipse cx="95" cy="45" rx="8" ry="4.500" fill="#c4b27e" transform="rotate(20 95 45)"/><path d="M82,58 L100,63 L80,63Z" fill="#8a3a34"/></g></svg><div class="a nm" style="width:76px;padding-left:3.5px"><span>Євгенія Стеценко</span></div></div>
<div class="a tile" style="left:917px;top:165px;width:113px;height:63px"><svg width="113" height="63" viewBox="0 0 113 63" style="left:0;top:0"><rect width="113" height="63" fill="#c9cdba"/><g filter="url(#b3)"><polygon points="0,0 113,0 113,6 88,25 50,25 0,8" fill="#c2c6b8"/><polygon points="0,8 50,25 50,41 0,49" fill="#d6dac2"/><rect x="50" y="25" width="38" height="18" fill="#cdd1bc"/><rect x="65" y="27" width="10" height="14" fill="#6a6a5e"/><rect x="68" y="29" width="4" height="10" fill="#b9bcae"/><polygon points="88,25 113,4 113,63 100,63 88,44" fill="#8e8872"/><polygon points="90,27 95,23 95,46 90,42" fill="#f4f6ee"/><polygon points="107,10 113,6 113,60 107,58" fill="#f2f4ea"/><polygon points="99,19 102,16 102,52 99,50" fill="#d9dbc8"/><polygon points="0,49 50,41 88,43 101,63 0,63" fill="#34302e"/><polygon points="60,43 80,43 90,60 48,60" fill="#56504e"/><path d="M70,43l-2,14" stroke="#26221f" stroke-width="1.500"/><ellipse cx="39" cy="8" rx="6" ry="2.600" fill="#fff"/><ellipse cx="51" cy="17" rx="4" ry="1.600" fill="#fff"/><ellipse cx="81" cy="15.500" rx="4.500" ry="1.600" fill="#fff"/><ellipse cx="57" cy="21.500" rx="3" ry="1" fill="#f8f8f4"/><ellipse cx="68" cy="22" rx="3" ry="1" fill="#f8f8f4"/><rect x="14" y="21" width="6" height="9" fill="#5d615a"/><rect x="28" y="24.500" width="5" height="8" fill="#62665e"/><rect x="38" y="29" width="3" height="5.500" fill="#7a7e72"/><rect x="44" y="30" width="2" height="4.500" fill="#8a8e80"/><ellipse cx="46" cy="52" rx="5" ry="4" fill="#8a5c50"/><rect x="6" y="45" width="14" height="6" fill="#24201f"/></g></svg><div class="a nm" style="width:85px;padding-left:15.5px"><svg width="8" height="10" viewBox="0 0 8 10" style="left:3.500px;top:1.500px" fill="none" stroke="#e0483e" stroke-width="1"><rect x="2.700" y=".8" width="2.600" height="5" rx="1.300" fill="#e0483e"/><path d="M1.200,4.500c0,4 5.600,4 5.600,0M4,7.500v1.700M7,.8l-6,8.200" /></svg><span>Irina Chystiakova</span></div></div>
<div class="a tile" style="left:917px;top:232.5px;width:113px;height:63px"><svg width="113" height="63" viewBox="0 0 113 63" style="left:0;top:0"><rect width="113" height="63" fill="url(#g3)"/><g filter="url(#b1)"><path d="M38,50 C36,30 40,8 58,3 C72,0 82,10 83,24 C84,36 80,44 78,50Z" fill="#2d2523"/><path d="M25,63 C28,50 40,47 52,47 L78,46 C92,48 100,54 103,63Z" fill="#383a3d"/><ellipse cx="64" cy="36" rx="14.500" ry="17" fill="#cfb1a7"/><path d="M48,26 C52,14 72,12 81,26 C74,20 58,19 48,26Z" fill="#2d2523"/><path d="M51,20 h28 v6 h-28Z" fill="#3a2f2c"/><ellipse cx="63" cy="30" rx="13" ry="5" fill="#d3b6ac"/><path d="M53,29h7M68,29h7" stroke="#5a4640" stroke-width="1.500"/><polygon points="88,50 100,53 104,63 90,63" fill="#a9c9ea"/></g></svg><div class="a nm" style="width:87.5px;padding-left:15.5px"><svg width="8" height="10" viewBox="0 0 8 10" style="left:3.500px;top:1.500px" fill="none" stroke="#e0483e" stroke-width="1"><rect x="2.700" y=".8" width="2.600" height="5" rx="1.300" fill="#e0483e"/><path d="M1.200,4.500c0,4 5.600,4 5.600,0M4,7.500v1.700M7,.8l-6,8.200" /></svg><span>Валентина Плющ</span></div></div>
<div class="a" style="left:913.700px;top:296.700px;width:119px;height:69.600px;background:#d6e97a;border-radius:1px;box-shadow:inset 0 0 0 1.500px #e4f0a4"></div><div class="a tile" style="left:917.5px;top:299.5px;width:111.5px;height:64px"><svg width="111.5" height="64" viewBox="0 0 111.5 64" style="left:0;top:0"><rect width="113" height="65" fill="#e9e9ef"/><g filter="url(#b2)"><rect x="4" y="8" width="3.500" height="4" fill="#b9bbc4"/><rect x="9" y="8.8" width="7" height="2.400" fill="#cfd0d8"/><rect x="21" y="8" width="3.500" height="4" fill="#b9bbc4"/><rect x="26" y="8.8" width="7" height="2.400" fill="#cfd0d8"/><rect x="38" y="8" width="3.500" height="4" fill="#b9bbc4"/><rect x="43" y="8.8" width="7" height="2.400" fill="#cfd0d8"/><rect x="55" y="8" width="3.500" height="4" fill="#b9bbc4"/><rect x="60" y="8.8" width="7" height="2.400" fill="#cfd0d8"/><rect x="72" y="8" width="3.500" height="4" fill="#b9bbc4"/><rect x="77" y="8.8" width="7" height="2.400" fill="#cfd0d8"/><rect x="89" y="8" width="3.500" height="4" fill="#b9bbc4"/><rect x="94" y="8.8" width="7" height="2.400" fill="#cfd0d8"/><rect x="106" y="8" width="3.500" height="4" fill="#b9bbc4"/><rect x="111" y="8.8" width="7" height="2.400" fill="#cfd0d8"/><rect x="7" y="19" width="3.500" height="4" fill="#b9bbc4"/><rect x="12" y="19.8" width="7" height="2.400" fill="#cfd0d8"/><rect x="24" y="19" width="3.500" height="4" fill="#b9bbc4"/><rect x="29" y="19.8" width="7" height="2.400" fill="#cfd0d8"/><rect x="41" y="19" width="3.500" height="4" fill="#b9bbc4"/><rect x="46" y="19.8" width="7" height="2.400" fill="#cfd0d8"/><rect x="58" y="19" width="3.500" height="4" fill="#b9bbc4"/><rect x="63" y="19.8" width="7" height="2.400" fill="#cfd0d8"/><rect x="75" y="19" width="3.500" height="4" fill="#b9bbc4"/><rect x="80" y="19.8" width="7" height="2.400" fill="#cfd0d8"/><rect x="92" y="19" width="3.500" height="4" fill="#b9bbc4"/><rect x="97" y="19.8" width="7" height="2.400" fill="#cfd0d8"/><rect x="109" y="19" width="3.500" height="4" fill="#b9bbc4"/><rect x="114" y="19.8" width="7" height="2.400" fill="#cfd0d8"/><rect x="4" y="30" width="3.500" height="4" fill="#b9bbc4"/><rect x="9" y="30.8" width="7" height="2.400" fill="#cfd0d8"/><rect x="21" y="30" width="3.500" height="4" fill="#b9bbc4"/><rect x="26" y="30.8" width="7" height="2.400" fill="#cfd0d8"/><rect x="38" y="30" width="3.500" height="4" fill="#b9bbc4"/><rect x="43" y="30.8" width="7" height="2.400" fill="#cfd0d8"/><rect x="55" y="30" width="3.500" height="4" fill="#b9bbc4"/><rect x="60" y="30.8" width="7" height="2.400" fill="#cfd0d8"/><rect x="72" y="30" width="3.500" height="4" fill="#b9bbc4"/><rect x="77" y="30.8" width="7" height="2.400" fill="#cfd0d8"/><rect x="89" y="30" width="3.500" height="4" fill="#b9bbc4"/><rect x="94" y="30.8" width="7" height="2.400" fill="#cfd0d8"/><rect x="106" y="30" width="3.500" height="4" fill="#b9bbc4"/><rect x="111" y="30.8" width="7" height="2.400" fill="#cfd0d8"/><rect x="7" y="41" width="3.500" height="4" fill="#b9bbc4"/><rect x="12" y="41.8" width="7" height="2.400" fill="#cfd0d8"/><rect x="24" y="41" width="3.500" height="4" fill="#b9bbc4"/><rect x="29" y="41.8" width="7" height="2.400" fill="#cfd0d8"/><rect x="41" y="41" width="3.500" height="4" fill="#b9bbc4"/><rect x="46" y="41.8" width="7" height="2.400" fill="#cfd0d8"/><rect x="58" y="41" width="3.500" height="4" fill="#b9bbc4"/><rect x="63" y="41.8" width="7" height="2.400" fill="#cfd0d8"/><rect x="75" y="41" width="3.500" height="4" fill="#b9bbc4"/><rect x="80" y="41.8" width="7" height="2.400" fill="#cfd0d8"/><rect x="92" y="41" width="3.500" height="4" fill="#b9bbc4"/><rect x="97" y="41.8" width="7" height="2.400" fill="#cfd0d8"/><rect x="109" y="41" width="3.500" height="4" fill="#b9bbc4"/><rect x="114" y="41.8" width="7" height="2.400" fill="#cfd0d8"/><rect x="4" y="52" width="3.500" height="4" fill="#b9bbc4"/><rect x="9" y="52.8" width="7" height="2.400" fill="#cfd0d8"/><rect x="21" y="52" width="3.500" height="4" fill="#b9bbc4"/><rect x="26" y="52.8" width="7" height="2.400" fill="#cfd0d8"/><rect x="38" y="52" width="3.500" height="4" fill="#b9bbc4"/><rect x="43" y="52.8" width="7" height="2.400" fill="#cfd0d8"/><rect x="55" y="52" width="3.500" height="4" fill="#b9bbc4"/><rect x="60" y="52.8" width="7" height="2.400" fill="#cfd0d8"/><rect x="72" y="52" width="3.500" height="4" fill="#b9bbc4"/><rect x="77" y="52.8" width="7" height="2.400" fill="#cfd0d8"/><rect x="89" y="52" width="3.500" height="4" fill="#b9bbc4"/><rect x="94" y="52.8" width="7" height="2.400" fill="#cfd0d8"/><rect x="106" y="52" width="3.500" height="4" fill="#b9bbc4"/><rect x="111" y="52.8" width="7" height="2.400" fill="#cfd0d8"/><ellipse cx="25" cy="24" rx="4.500" ry="5.500" fill="#f3eeee" stroke="#b04848" stroke-width="1.300"/></g><g filter="url(#b1)" transform="translate(0,-2.500)"><path d="M18,70 C22,52 34,48 46,46 L62,46 C78,48 88,52 92,70Z" fill="#262c34"/><path d="M31,34 C28,16 36,3 50,3 C64,3 71,16 69,32 C68,40 66,44 62,47 L38,46 C34,42 32,39 31,34Z" fill="#2a2220"/><ellipse cx="51" cy="35" rx="13.500" ry="17" fill="#b18878"/><path d="M36,24 C40,12 60,10 66,24 C58,18 44,18 36,24Z" fill="#2a2220"/><rect x="38" y="14" width="26" height="8" fill="#2e2523"/><ellipse cx="50" cy="28" rx="11" ry="4" fill="#b48c7c"/><path d="M41,27h7M54,27h7" stroke="#4a3630" stroke-width="1.400"/><path d="M46,42h9" stroke="#7a4a44" stroke-width="1.500"/><path d="M62,48 l6,-2 l4,16 l-8,2Z" fill="#3a4c6a"/></g></svg><div class="a nm" style="width:90.5px;padding-left:3.5px"><span>Nataliya Avshenyuk</span></div></div>
<div class="a tile" style="left:917px;top:368px;width:113px;height:63px"><svg width="113" height="63" viewBox="0 0 113 63" style="left:0;top:0"><rect width="113" height="63" fill="#434242"/><g filter="url(#b1)"><rect x="0" y="0" width="42" height="63" fill="#7e5f5a"/><rect x="0" y="0" width="42" height="13" fill="#6e5a58"/><rect x="17" y="13" width="24" height="40" fill="#8a6860"/><rect x="5" y="15" width="9" height="36" fill="#cfb2b2"/><rect x="0" y="15" width="5" height="36" fill="#a08480"/><rect x="14.500" y="13" width="2.500" height="40" fill="#4e3e3a"/><circle cx="88" cy="3" r="1.200" fill="#626262"/><circle cx="94" cy="3" r="1.200" fill="#626262"/><circle cx="100" cy="3" r="1.200" fill="#626262"/><circle cx="106" cy="3" r="1.200" fill="#626262"/><circle cx="112" cy="3" r="1.200" fill="#626262"/><circle cx="91" cy="10" r="1.200" fill="#626262"/><circle cx="97" cy="10" r="1.200" fill="#626262"/><circle cx="103" cy="10" r="1.200" fill="#626262"/><circle cx="109" cy="10" r="1.200" fill="#626262"/><circle cx="115" cy="10" r="1.200" fill="#626262"/><circle cx="88" cy="17" r="1.200" fill="#626262"/><circle cx="94" cy="17" r="1.200" fill="#626262"/><circle cx="100" cy="17" r="1.200" fill="#626262"/><circle cx="106" cy="17" r="1.200" fill="#626262"/><circle cx="112" cy="17" r="1.200" fill="#626262"/><circle cx="91" cy="24" r="1.200" fill="#626262"/><circle cx="97" cy="24" r="1.200" fill="#626262"/><circle cx="103" cy="24" r="1.200" fill="#626262"/><circle cx="109" cy="24" r="1.200" fill="#626262"/><circle cx="115" cy="24" r="1.200" fill="#626262"/><circle cx="88" cy="31" r="1.200" fill="#626262"/><circle cx="94" cy="31" r="1.200" fill="#626262"/><circle cx="100" cy="31" r="1.200" fill="#626262"/><circle cx="106" cy="31" r="1.200" fill="#626262"/><circle cx="112" cy="31" r="1.200" fill="#626262"/><circle cx="91" cy="38" r="1.200" fill="#626262"/><circle cx="97" cy="38" r="1.200" fill="#626262"/><circle cx="103" cy="38" r="1.200" fill="#626262"/><circle cx="109" cy="38" r="1.200" fill="#626262"/><circle cx="115" cy="38" r="1.200" fill="#626262"/><circle cx="88" cy="45" r="1.200" fill="#626262"/><circle cx="94" cy="45" r="1.200" fill="#626262"/><circle cx="100" cy="45" r="1.200" fill="#626262"/><circle cx="106" cy="45" r="1.200" fill="#626262"/><circle cx="112" cy="45" r="1.200" fill="#626262"/><circle cx="91" cy="52" r="1.200" fill="#626262"/><circle cx="97" cy="52" r="1.200" fill="#626262"/><circle cx="103" cy="52" r="1.200" fill="#626262"/><circle cx="109" cy="52" r="1.200" fill="#626262"/><circle cx="115" cy="52" r="1.200" fill="#626262"/><circle cx="88" cy="59" r="1.200" fill="#626262"/><circle cx="94" cy="59" r="1.200" fill="#626262"/><circle cx="100" cy="59" r="1.200" fill="#626262"/><circle cx="106" cy="59" r="1.200" fill="#626262"/><circle cx="112" cy="59" r="1.200" fill="#626262"/><ellipse cx="70" cy="27" rx="21" ry="26" fill="#b9b5b1"/><ellipse cx="62" cy="18" rx="11" ry="13" fill="#d6d3cf"/><ellipse cx="72" cy="37" rx="14" ry="14" fill="#ab938b"/><path d="M54,28 C58,14 78,8 90,24 C80,18 64,20 54,28Z" fill="#c9c5c1"/><ellipse cx="76" cy="31" rx="7.500" ry="3.200" fill="#cfe4f0"/><ellipse cx="60" cy="30" rx="4" ry="2.500" fill="#8a6a70"/></g></svg><div class="a nm" style="width:113px;padding-left:15.5px"><svg width="8" height="10" viewBox="0 0 8 10" style="left:3.500px;top:1.500px" fill="none" stroke="#e0483e" stroke-width="1"><rect x="2.700" y=".8" width="2.600" height="5" rx="1.300" fill="#e0483e"/><path d="M1.200,4.500c0,4 5.600,4 5.600,0M4,7.500v1.700M7,.8l-6,8.200" /></svg><span>Валентина Статівка</span></div></div>
<div class="a" style="left:948px;top:502.500px;width:50px;height:24px;background:#111"></div><svg width="12" height="7" viewBox="0 0 12 7" style="left:967px;top:511.500px" fill="none" stroke="#e8e8e8" stroke-width="1.300"><path d="M1.500,1.500l4.500,4l4.500,-4"/></svg>
<div class="a tile" style="left:917.3px;top:435.3px;width:112px;height:62.5px"><svg width="112" height="62.5" viewBox="0 0 112 62.5" style="left:0;top:0"><rect width="113" height="63" fill="#242424"/><g filter="url(#b2)"><rect x="32.500" y="0" width="47.500" height="63" fill="#b9ab9c"/><rect x="32.500" y="0" width="9" height="63" fill="#8f7e6c"/><rect x="41" y="0" width="2" height="63" fill="#a39382"/><path d="M43,52 C42,28 45,9 59,8 C73,8 77,24 77,50Z" fill="#c7ae8a"/><path d="M47,24 C48,12 56,8 61,9 C70,10 73,17 74,27" fill="#ab916e"/><ellipse cx="59.500" cy="31" rx="10" ry="14" fill="#caa690"/><path d="M51,26h6.500M62.500,26h6.500" stroke="#5a4438" stroke-width="1.400"/><path d="M56.500,40h6" stroke="#9a5a54" stroke-width="1.200"/><path d="M35,63 C36,51 45,47 53,46 C57,53 63,53 67,46 C76,48 80,52 80,63Z" fill="#dcc8c8"/><path d="M53,46 C57,57 63,57 67,46 C65,63 55,63 53,46Z" fill="#c9b0b2"/><rect x="78" y="42" width="2" height="8" fill="#3a3430"/></g></svg><div class="a nm" style="width:42.5px;padding-left:15.5px"><svg width="8" height="10" viewBox="0 0 8 10" style="left:3.500px;top:1.500px" fill="none" stroke="#e0483e" stroke-width="1"><rect x="2.700" y=".8" width="2.600" height="5" rx="1.300" fill="#e0483e"/><path d="M1.200,4.500c0,4 5.600,4 5.600,0M4,7.500v1.700M7,.8l-6,8.200" /></svg><span>Karina</span></div><div class="a" style="left:35px;top:63.300px;width:41.500px;height:2.600px;background:#e9ea74"></div></div>
<!--/TILES-->
<!--BOTTOM-->
<div class="a" id="zbar">
<div class="a zl" style="left:-21.5px;top:39px;width:120px;text-align:center;">Включить звук</div>
<div class="a zl" style="left:55.2px;top:39px;width:120px;text-align:center;">Остановить видео</div>
<div class="a zl" style="left:161.5px;top:39px;width:120px;text-align:center;">Безопасность</div>
<div class="a zl" style="left:239.5px;top:39px;width:120px;text-align:center;">Участники</div>
<div class="a zl" style="left:314.0px;top:39px;width:120px;text-align:center;">Опросы</div>
<div class="a zl" style="left:374.0px;top:39px;width:120px;text-align:center;">Чат</div>
<div class="a zl" style="left:645.0px;top:39px;width:120px;text-align:center;">Реакции</div>
<div class="a zl" style="left:704.5px;top:39px;width:120px;text-align:center;">Приложения</div>
<div class="a zl" style="left:778.5px;top:39px;width:120px;text-align:center;">Доски сообщений</div>
<div class="a zl" style="left:857.5px;top:39px;width:120px;text-align:center;">Дополнительно</div>
<div class="a zl" style="left:471px;top:39px;color:#2fc45a;font-weight:bold;transform-origin:0 50%">Демонстрация экрана</div>
<div class="a" style="left:311.800px;top:20.700000000000045px;font-size:9.300px;line-height:12px;color:#bdbdbd">44</div>
<svg width="1080" height="53" viewBox="0 0 1080 53" style="left:0;top:0" fill="none">
<path d="M61.7,29.600000000000023l2.800,-2.800l2.800,2.800" stroke="#b4b4b4" stroke-width="1.200" fill="none"/>
<path d="M145.2,29.600000000000023l2.800,-2.800l2.800,2.800" stroke="#b4b4b4" stroke-width="1.200" fill="none"/>
<path d="M333.2,29.600000000000023l2.800,-2.800l2.800,2.800" stroke="#b4b4b4" stroke-width="1.200" fill="none"/>
<path d="M453.2,29.600000000000023l2.800,-2.800l2.800,2.800" stroke="#b4b4b4" stroke-width="1.200" fill="none"/>
<path d="M721.2,29.600000000000023l2.800,-2.800l2.800,2.800" stroke="#b4b4b4" stroke-width="1.200" fill="none"/>
<g transform="translate(38.500,27.2)"><rect x="-2.500" y="-8" width="5" height="9.500" rx="2.500" fill="#7d6462"/><path d="M-4.800,-1.500c0,6.500 9.600,6.500 9.600,0M0,3.800v3.700M-2.800,7.700h5.600" stroke="#7d6462" stroke-width="1.200"/><path d="M7,-9l-13.500,17" stroke="#d9736a" stroke-width="1.300"/></g>
<g transform="translate(115,28)" fill="#c2c2c2"><rect x="-9" y="-5" width="12.500" height="10" rx="2.300"/><path d="M4.500,-1.300l4.700,-3.200v9l-4.700,-3.200z"/></g>
<g transform="translate(222,28) scale(.8)"><path d="M0,-8.500l7.500,2.500v5c0,5 -4,8 -7.500,9.500c-3.500,-1.500 -7.500,-4.500 -7.500,-9.500v-5z" fill="#cfcfcf" stroke="#cfcfcf" stroke-width="1.300"/><path d="M0,-6.500v7h6v-5zM0,.5h-6c.5,3.500 3.500,5.500 6,7z" fill="#2a2a2a"/></g>
<g transform="translate(299.500,28.5)" fill="#c6c6c6"><circle cx="-3" cy="-4" r="3.200"/><path d="M-9,5.500c0,-7 12,-7 12,0z"/><circle cx="4.500" cy="-3.500" r="2.600"/><path d="M4,5.500c0,-2.500 -1,-4 -2,-5c4,-1.500 8,.5 8,5z"/></g>
<g transform="translate(374.300,28.8)" fill="#c6c6c6"><rect x="-6" y="-1" width="3" height="7"/><rect x="-1.500" y="-8" width="3" height="14"/><rect x="3" y="-4" width="3" height="10"/></g>
<g transform="translate(434,28)"><path d="M-5.500,-6h11a1.500,1.500 0 0 1 1.500,1.500v7a1.500,1.500 0 0 1 -1.500,1.500h-6.500l-3.500,3v-3h-1a1.500,1.500 0 0 1 -1.500,-1.500v-7a1.500,1.500 0 0 1 1.500,-1.500z" fill="#b2b2b2"/></g>
<rect x="436" y="17.799999999999955" width="15.500" height="9.700" rx="3" fill="#dd3a34"/>
<rect x="507" y="22" width="17" height="13" rx="2.500" fill="#2fc45a"/><path d="M515.500,29v-4.500M513,26.5l2.500,-2.300l2.500,2.300" stroke="#0d4d20" stroke-width="1.300"/>
<rect x="606.500" y="19.700000000000045" width="13.500" height="13" rx="1.500" fill="#9a9a9a"/><rect x="622.500" y="19.700000000000045" width="14" height="13" rx="1.500" fill="#9a9a9a"/><rect x="610.500" y="22.5" width="2" height="8" fill="#222"/><rect x="614.200" y="22.5" width="2" height="8" fill="#222"/><rect x="626.300" y="23" width="6.500" height="6" fill="#222"/>
<g transform="translate(705.300,27.4)"><circle cx="-.5" cy=".5" r="6.300" fill="#c4c4c4"/><circle cx="-2.800" cy="-1" r=".9" fill="#222"/><circle cx="1.800" cy="-1" r=".9" fill="#222"/><path d="M-3.500,2.500c1.500,2.500 4.500,2.500 6,0" stroke="#222" stroke-width="1"/><path d="M6.500,-8.500v4M4.500,-6.500h4" stroke="#cfcfcf" stroke-width="1.200"/></g>
<g transform="translate(765.300,28.4)" stroke="#c6c6c6" stroke-width="1.300" fill="none"><path d="M-5.500,1v-4a2.500,2.500 0 0 1 2.500,-2.500h2.500M5.500,-1v4a2.500,2.500 0 0 1 -2.500,2.500h-3.500"/><circle cx="3.800" cy="-3.800" r="1.900"/><circle cx="-3.800" cy="3.800" r="1.700"/></g>
<g transform="translate(838.600,27)" stroke="#c6c6c6" stroke-width="1.300"><rect x="-7" y="-5.500" width="14" height="10.500" rx="1.500"/><rect x="-2" y="2.500" width="8.500" height="3" fill="#c6c6c6" stroke="none"/></g>
<g fill="#c6c6c6"><circle cx="912" cy="28" r="1.500"/><circle cx="918" cy="28" r="1.500"/><circle cx="924" cy="28" r="1.500"/></g>
</svg>
<div class="a" style="left:436px;top:17.799999999999955px;width:15.500px;height:9.700px;font-size:7.800px;line-height:9.700px;font-weight:bold;color:#fff;text-align:center">12</div>
<div class="a" id="endb" style="left:1007.5px;top:25px">Завершение</div>
<div class="a" id="tip" style="left:488.700px;top:28px">Презентация Microsoft PowerPoint - Microsoft<br>PowerPoint</div>
</div>
<div class="a" id="task">
<div class="a" style="left:545.500px;top:0;width:70px;height:28px;background:#2a3a46"></div>
<div class="a" style="left:754.500px;top:0;width:69.500px;height:28px;background:#46525e"></div>
<div class="a" style="left:139px;top:26.300px;width:63px;height:1.700px;background:#86aed4"></div>
<div class="a" style="left:272px;top:26.300px;width:61px;height:1.700px;background:#86aed4"></div>
<div class="a" style="left:342px;top:26.300px;width:60px;height:1.700px;background:#86aed4"></div>
<div class="a" style="left:411px;top:26.300px;width:61px;height:1.700px;background:#86aed4"></div>
<div class="a" style="left:480px;top:26.300px;width:61px;height:1.700px;background:#86aed4"></div>
<div class="a" style="left:549px;top:26.300px;width:66px;height:1.700px;background:#86aed4"></div>
<div class="a" style="left:619px;top:26.300px;width:62px;height:1.700px;background:#86aed4"></div>
<div class="a" style="left:689px;top:26.300px;width:61px;height:1.700px;background:#86aed4"></div>
<div class="a" style="left:756px;top:26.300px;width:68px;height:1.700px;background:#86aed4"></div>
<div class="a tk" style="left:160px;top:8.500px">Integrati...</div>
<div class="a tk" style="left:290px;top:8.500px">освіта дл...</div>
<div class="a tk" style="left:360px;top:8.500px">тези до к...</div>
<div class="a tk" style="left:430px;top:8.500px">Telegram...</div>
<div class="a tk" style="left:499px;top:8.500px">Viber</div>
<div class="a tk" style="left:570px;top:8.500px">Презент...</div>
<div class="a tk" style="left:639px;top:8.500px">Початок ...</div>
<div class="a tk" style="left:709px;top:8.500px">Microsof...</div>
<div class="a tk" style="left:778px;top:8.500px">Zoom Ко...</div>
<div class="a tk" style="left:857px;top:8px;font-size:10px">8°C</div>
<div class="a tk" style="left:976px;top:8.500px;font-size:8.500px">УКР</div>
<div class="a tk" style="left:995px;top:1.500px;width:50px;text-align:center;font-size:8.800px">9:23</div>
<div class="a tk" style="left:995px;top:15.300px;width:50px;text-align:center;font-size:8.800px">28.10.2022</div>
<svg width="1080" height="28" viewBox="0 0 1080 28" style="left:0;top:0" fill="none">
<g fill="#fff"><path d="M13,10.2l4.600,-.7v5h-4.600zM18.300,9.4l5.700,-.9v6h-5.700zM13,15.2h4.600v5l-4.600,-.7zM18.300,15.2h5.700v6l-5.700,-.9z"/></g>
<g stroke="#fff" stroke-width="1.300"><circle cx="54" cy="13.0" r="3.800"/><path d="M51.200,16.0l-4,4.300"/></g>
<g stroke="#f0f0f0" stroke-width="1.200"><rect x="83" y="11.0" width="6.500" height="7"/><path d="M80.500,9.0v2.500M80.500,17.5v2.500M80.500,9.0h2M80.500,20.0h2M92,8.5v4.500M92,16.0v4.500"/></g>
<g><rect x="112.500" y="9.0" width="15.500" height="13.500" rx="1.500" fill="#f0f0f0"/><path d="M116.500,9.0v-2.300h7.500v2.300" stroke="#f0f0f0" stroke-width="1.300"/><rect x="117" y="12.5" width="3" height="3" fill="#e04a3a"/><rect x="121" y="12.5" width="3" height="3" fill="#7ab648"/><rect x="117" y="16.5" width="3" height="3" fill="#3a8ee0"/><rect x="121" y="16.5" width="3" height="3" fill="#f0b82a"/></g>
<g transform="translate(149.500,13.5) scale(1.120) translate(-149.500,-14.5)"><circle cx="149.500" cy="14.5" r="7.500" fill="#2a86d4"/><path d="M142.500,16.5c0,-9 13,-11 14.500,-2c-1,5 -8,4 -8,1c-3,1 -2,6 3,6.500c-5,1.500 -9.500,-1.500 -9.500,-5.500z" fill="#4fd18a"/><path d="M146,15.5c0,-4 6,-5 8,-2c-2,-1 -5,0 -5,2c0,2 2,3 4,3c-3,2 -7,0 -7,-3z" fill="#123a78"/></g>
<ellipse cx="220" cy="13.7" rx="8.800" ry="8" fill="#d9242b"/><ellipse cx="220" cy="13.7" rx="3.400" ry="5.600" fill="#7e1a20"/>
<g transform="translate(0,1.200)"><rect x="242.500" y="10.5" width="17" height="11" rx="1" fill="#2c8de0"/><path d="M242.500,10.5l8.500,6.500l8.500,-6.500" stroke="#9fd0f8" stroke-width="1.200"/><path d="M242.500,10.5l8.500,-4l8.500,4z" fill="#1a6cc0"/></g>
<g><rect x="274" y="7.5" width="9.500" height="14" rx="1" fill="#f0c040"/><rect x="276" y="7.5" width="7.500" height="11.500" fill="#f8dc7a"/></g>
<g transform="translate(350,13.5) scale(1.120) translate(-350,-14.5)"><circle cx="350" cy="14.5" r="7.500" fill="#e04a3a"/><path d="M350,14.5l-6.500,3.700a7.500,7.500 0 0 0 6.500,3.800l3.500,-6z" fill="#3aa757"/><path d="M350,14.5l3.500,1.500l-3.500,6a7.500,7.500 0 0 0 7,-10.500h-7z" fill="#f7c32e"/><circle cx="350" cy="14.5" r="3.300" fill="#fff"/><circle cx="350" cy="14.5" r="2.500" fill="#3a7ee8"/><circle cx="354.500" cy="18.5" r="3" fill="#6a4a3a"/></g>
<g><circle cx="419" cy="13.2" r="8" fill="#2ea6df"/><path d="M414.500,14.0l9,-3.800l-1.500,8l-3,-2.200l-1.500,1.500l-.3,-2.300z" fill="#fff"/><rect x="419" y="16.0" width="11" height="7.500" rx="2.500" fill="#e0382f"/></g>
<g><path d="M482.500,10.5a4,4 0 0 1 4,-4h5a4,4 0 0 1 4,4v4a4,4 0 0 1 -4,4h-3l-3,3v-3.500a4,4 0 0 1 -3,-3.500z" fill="#7d51c8" stroke="#e9defa" stroke-width="1.200"/><path d="M486.500,10.0c0,4 2,6 5.500,6.500" stroke="#fff" stroke-width="1.300"/><rect x="487.500" y="13.7" width="12" height="10" rx="3" fill="#e0382f"/></g>
<g><rect x="552.5" y="7.5" width="12.500" height="14" rx="1" fill="#f6f2ef"/><rect x="549.5" y="9.0" width="10" height="11" rx="1" fill="#d85a2a"/><path d="M553.0,17.5v-6h2.300a1.800,1.800 0 0 1 0,3.600h-2.300" stroke="#fff" stroke-width="1.300"/><circle cx="562.0" cy="13.0" r="2.200" fill="#e88a5a"/></g>
<g><rect x="622" y="7.5" width="12.500" height="14" rx="1" fill="#f6f2ef"/><rect x="619" y="9.0" width="10" height="11" rx="1" fill="#d85a2a"/><path d="M622.5,17.5v-6h2.300a1.800,1.800 0 0 1 0,3.600h-2.300" stroke="#fff" stroke-width="1.300"/><circle cx="631.5" cy="13.0" r="2.200" fill="#e88a5a"/></g>
<g><rect x="692" y="7.5" width="12.500" height="14" rx="1" fill="#f2f4f8"/><rect x="689" y="9.0" width="10" height="11" rx="1" fill="#2b5fb8"/><path d="M691,11.5l1.500,6l1.500,-5l1.500,5l1.500,-6" stroke="#fff" stroke-width="1.100"/><path d="M700.500,11.0h3M700.500,13.5h3M700.500,16.0h3" stroke="#5a8ad8" stroke-width="1"/></g>
<g transform="translate(1.300,-.8)"><rect x="758.500" y="7.0" width="15" height="15.500" rx="3.500" fill="#4688ea"/><rect x="761.500" y="11.5" width="6" height="6" rx="1.300" fill="#fff"/><path d="M768.300,13.7l2.700,-2v5.600l-2.700,-2z" fill="#fff"/></g>
<g fill="#cfe0f6"><circle cx="838.500" cy="16.0" r="3.800"/><circle cx="843" cy="13.0" r="5"/><circle cx="847.500" cy="16.3" r="3.500"/><rect x="838.500" y="15.5" width="9" height="4.300"/></g>
<g stroke="#fff" stroke-width="1.100"><path d="M891.500,16.0l3.500,-3.500l3.500,3.500"/><rect x="909" y="9.0" width="4.500" height="8" rx="1" fill="#dfe6ee" stroke="none"/><rect x="910" y="17.0" width="2.500" height="3.500" fill="#dfe6ee" stroke="none"/><rect x="924.500" y="12.0" width="9" height="5.500" fill="#cfd8e0"/><path d="M923,13.5v2.500" /><path d="M924,10.5l2,2.500" stroke="#fff" stroke-width=".9"/><path d="M939.500,13.0h2l2.500,-2.500v8l-2.500,-2.500h-2z" stroke-width=".9"/><path d="M946,12.5c1.300,1.300 1.300,3 0,4.300M948,10.7c2.300,2.500 2.300,5.500 0,8" stroke-width=".9"/><path d="M957.500,19.0c0,-5 4,-9 9,-9M960.500,19.0c0,-3.300 2.700,-6 6,-6M963.500,19.0c0,-1.700 1.300,-3 3,-3" stroke-width=".9" stroke="#d0d8e0"/><path d="M1053.500,9.0h11v8.500l-2.500,2.500h-8.500z" stroke-width="1.200"/><circle cx="1063" cy="18.5" r="1.600" fill="#fff" stroke="none"/></g>
<path d="M1076.500,0v28" stroke="#5a6a78" stroke-width=".8"/>
</svg>
<div class="a" style="left:419px;top:16px;width:11px;height:7.500px;font-size:5.500px;line-height:7.500px;font-weight:bold;color:#fff;text-align:center">85</div>
<div class="a" style="left:487.500px;top:13.700px;width:12px;height:10px;font-size:6.500px;line-height:10px;font-weight:bold;color:#fff;text-align:center">37</div>
</div>
<!--/BOTTOM-->
<!--TOPBITS-->
<svg width="11" height="10" viewBox="0 0 11 10" style="left:3px;top:3px"><rect x=".3" y=".3" width="10" height="9.300" rx="2.500" fill="#4a8cf0"/><rect x="2.200" y="3" width="4.300" height="4" rx=".9" fill="#fff"/><path d="M6.900,4.400l1.900,-1.300v3.800l-1.900,-1.300z" fill="#fff"/></svg>
<svg width="90" height="16" viewBox="0 0 90 16" style="left:990px;top:0" fill="none"><path d="M4.500,7.200h7.300" stroke="#9a9a9a" stroke-width="1"/><rect x="37.500" y="4.500" width="5.800" height="6" stroke="#7d7d7d" stroke-width="1.100"/><path d="M39.500,4.500v-1.200h5v5.500h-1.200" stroke="#a0a0a0" stroke-width=".8"/><path d="M70.500,4.500l6.500,6.500M77,4.500l-6.500,6.500" stroke="#b5b5b5" stroke-width="1"/></svg>
<svg width="16" height="16" viewBox="0 0 16 16" style="left:7.500px;top:22px"><path d="M8,2.500l5,1.700v3.800c0,3.300 -2.400,5.300 -5,6.300c-2.600,-1 -5,-3 -5,-6.300v-3.800z" fill="#3fd063" stroke="#0b5a22" stroke-width="2.200"/><path d="M5.800,8l1.700,1.700l2.800,-3.200" stroke="#0f8a33" stroke-width="1.500" fill="none"/></svg>
<div class="a" id="rec"><svg width="151" height="19" viewBox="0 0 151 19" style="left:0;top:0"><circle cx="14.300" cy="8" r="4.600" fill="#e6c4c8"/><circle cx="14.300" cy="8" r="2.300" fill="#cf5563"/><rect x="121.500" y="6.300" width="2.300" height="6.500" fill="#fff"/><rect x="125.500" y="6.300" width="2.300" height="6.500" fill="#fff"/><rect x="140.500" y="6.500" width="6" height="6" fill="#fff"/><path d="M133.500,0v19" stroke="#1b1b1b" stroke-width="1"/></svg><div class="a" style="left:46px;top:3px;font-size:8.800px;line-height:12px;font-weight:bold;color:#f2f2f2">Запись...</div></div>
<div class="a" id="vid"><svg width="9" height="9" viewBox="0 0 9 9" style="left:5.500px;top:3px" fill="#fff"><rect x="0" y="0" width="3.500" height="2.300"/><rect x="4.300" y="0" width="3.500" height="2.300"/><rect x="0" y="2.900" width="3.500" height="2.300"/><rect x="4.300" y="2.900" width="3.500" height="2.300"/><rect x="0" y="5.800" width="3.500" height="2.300"/><rect x="4.300" y="5.800" width="3.500" height="2.300"/></svg><div class="a" style="left:16.200px;top:1.800px;font-size:8.200px;line-height:12px;color:#f2f2f2">Вид</div></div>
<svg width="10" height="14" viewBox="0 0 10 14" style="left:704.500px;top:331px"><path d="M1,1v10l2.500,-2.300l1.800,4l1.700,-.8l-1.800,-3.900h3.300z" fill="#fff" stroke="#333" stroke-width=".8"/></svg>
<!--/TOPBITS-->
</body>
</html>
